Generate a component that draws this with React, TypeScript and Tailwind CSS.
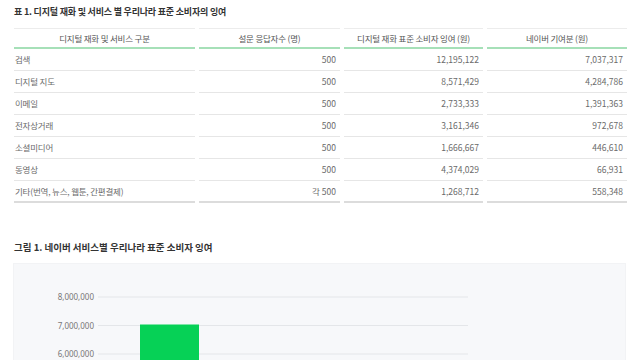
const rows = [
  { name: "검색", count: "500", surplus: "12,195,122", naver: "7,037,317" },
  { name: "디지털 지도", count: "500", surplus: "8,571,429", naver: "4,284,786" },
  { name: "이메일", count: "500", surplus: "2,733,333", naver: "1,391,363" },
  { name: "전자상거래", count: "500", surplus: "3,161,346", naver: "972,678" },
  { name: "소셜미디어", count: "500", surplus: "1,666,667", naver: "446,610" },
  { name: "동영상", count: "500", surplus: "4,374,029", naver: "66,931" },
  { name: "기타(번역, 뉴스, 웹툰, 간편결제)", count: "각 500", surplus: "1,268,712", naver: "558,348" },
];

const headers = ["디지털 재화 및 서비스 구분", "설문 응답자수 (명)", "디지털 재화 표준 소비자 잉여 (원)", "네이버 기여분 (원)"];

const ticks = [
  { label: "8,000,000", y: 33 },
  { label: "7,000,000", y: 61.5 },
  { label: "6,000,000", y: 90 },
];

export default function App() {
  return (
    <div
      className="w-[640px] h-[360px] overflow-hidden bg-white px-[14px] pt-[5px]"
      style={{ fontFamily: '"Noto Sans CJK KR", "Noto Sans", sans-serif' }}
    >
      <h2 className="text-[9px] font-bold text-[#333] leading-[14px] tracking-[-0.2px]">
        표 1. 디지털 재화 및 서비스 별 우리나라 표준 소비자의 잉여
      </h2>

      {/* Table */}
      <div className="mt-[9px] grid grid-cols-[181px_141px_139px_140px] gap-x-[4px] w-[613px] text-[8.5px] text-[#6a6a6a]">
        {headers.map((h) => (
          <div
            key={h}
            className="h-[21px] flex items-center justify-center border-t border-[#ececec] border-b-2 border-b-[#a6e0b8] text-[#555] tracking-[-0.2px]"
          >
            {h}
          </div>
        ))}
        {rows.map((r, i) => {
          const last = i === rows.length - 1;
          const cell = last
            ? "h-[22px] flex items-center border-b-2 border-[#dcdcdc]"
            : "h-[22px] flex items-center border-b border-[#e6e6e6]";
          return [
            <div key={r.name + "a"} className={cell + " pl-px tracking-[-0.2px]"}>{r.name}</div>,
            <div key={r.name + "b"} className={cell + " justify-end pr-[4px]"}>{r.count}</div>,
            <div key={r.name + "c"} className={cell + " justify-end pr-[4px]"}>{r.surplus}</div>,
            <div key={r.name + "d"} className={cell + " justify-end pr-[4px]"}>{r.naver}</div>,
          ];
        })}
      </div>

      <h2 className="mt-[37px] text-[9.5px] font-bold text-[#333] leading-[14px]">
        그림 1. 네이버 서비스별 우리나라 표준 소비자 잉여
      </h2>

      {/* Chart */}
      <div className="mt-[9px] -ml-px w-[613px] h-[120px] bg-[#f7f8fa] border border-[#f2f3f5]">
        <svg width="611" height="120" className="block">
          {ticks.map((t) => (
            <g key={t.label}>
              <line x1="84" x2="454" y1={t.y} y2={t.y} stroke="#e4e6e9" strokeWidth="1" />
              <text
                x="80"
                y={t.y + 3}
                textAnchor="end"
                fontSize="8"
                fill="#777"
                fontFamily='"Noto Sans", sans-serif'
              >
                {t.label}
              </text>
            </g>
          ))}
          <rect x="126" y="60.5" width="59" height="80" fill="#06d156" />
        </svg>
      </div>
    </div>
  );
}
